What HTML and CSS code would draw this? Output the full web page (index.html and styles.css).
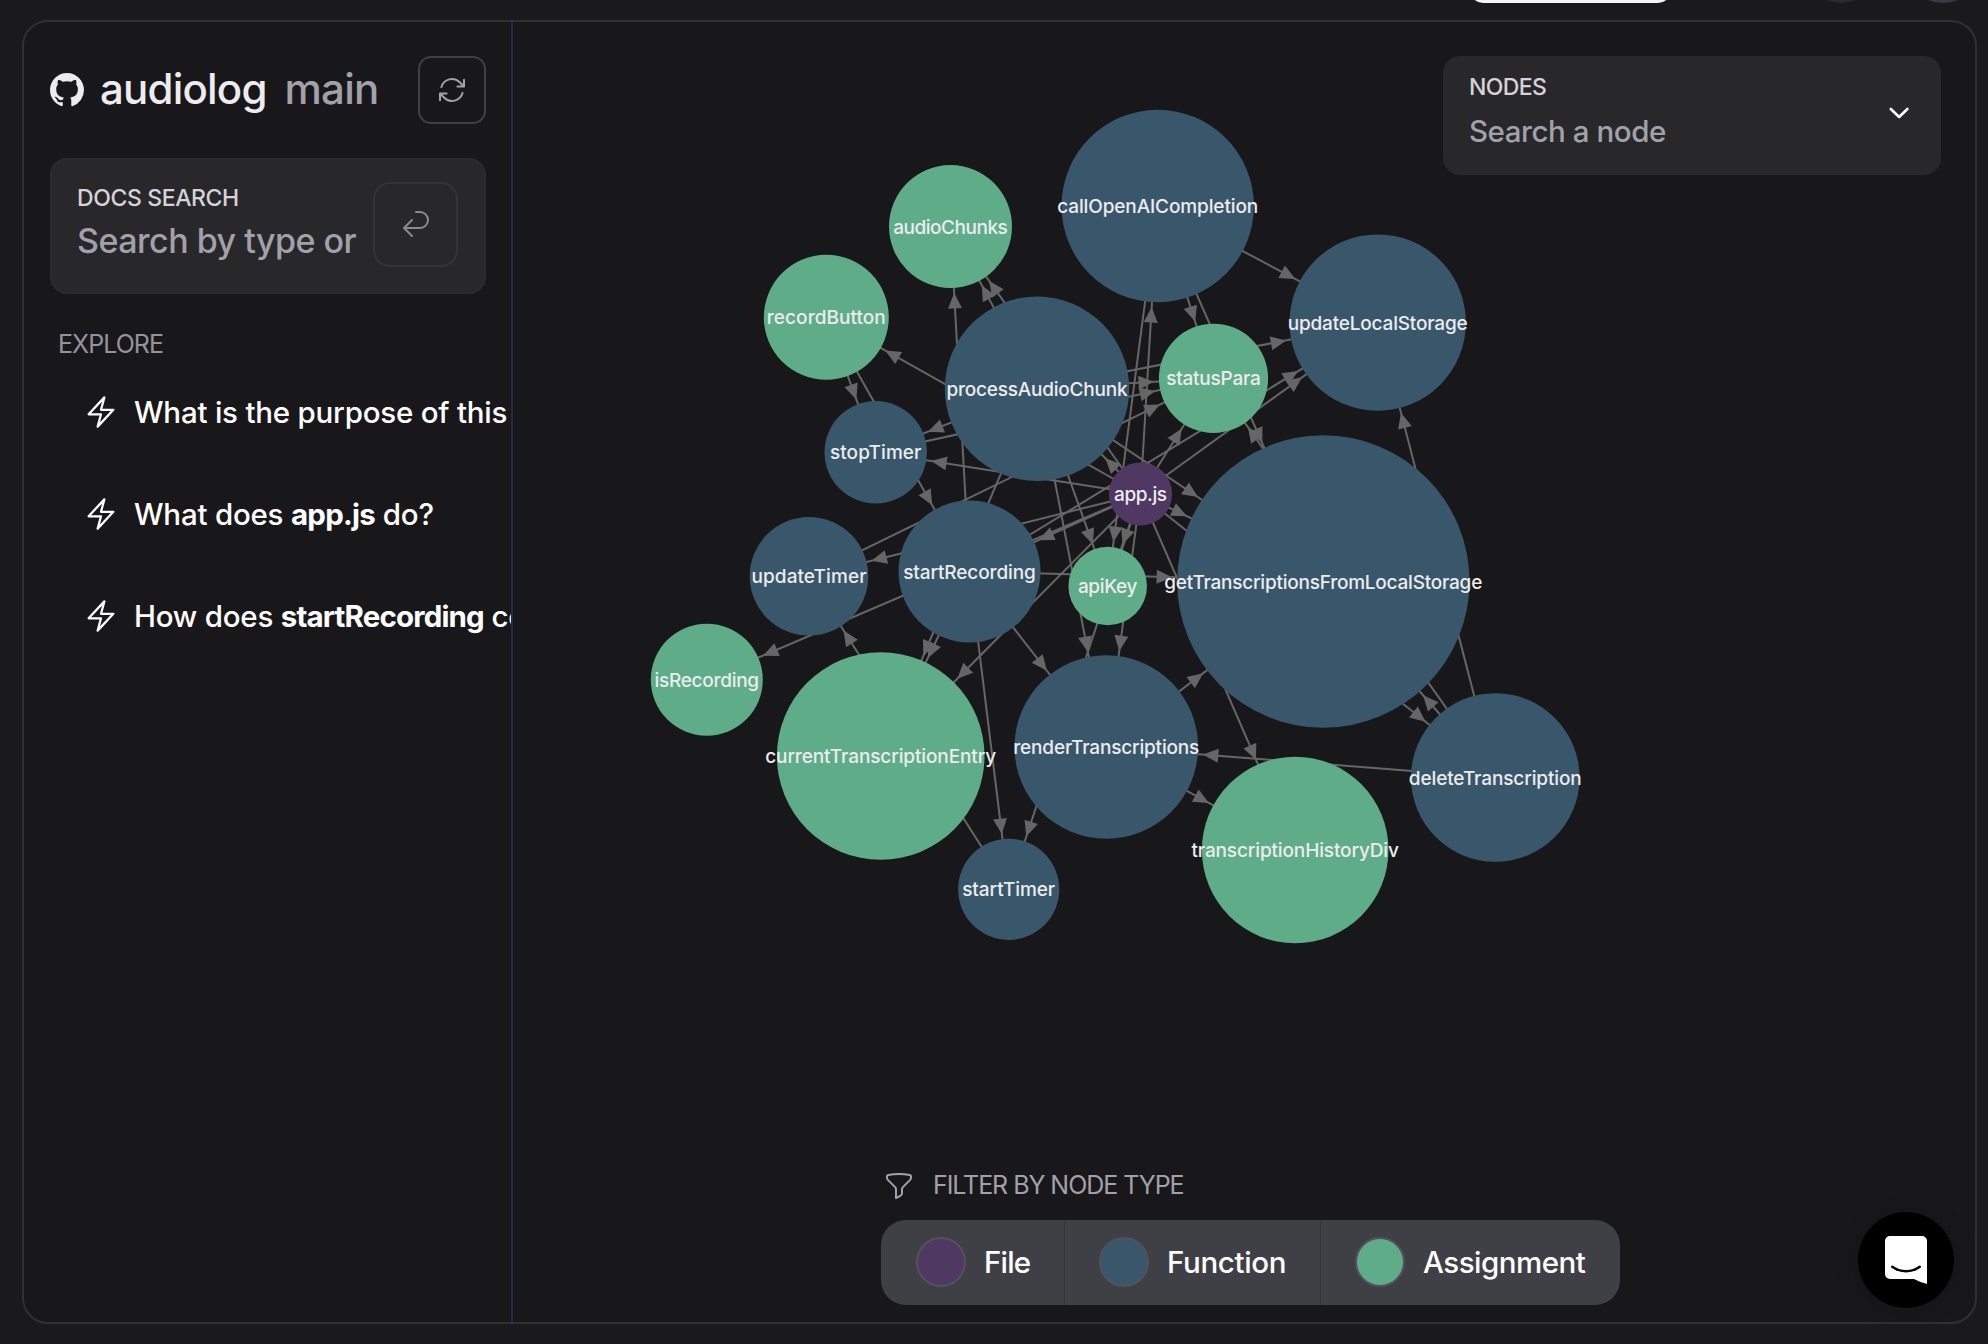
FILE: index.html
```
<!DOCTYPE html>
<html lang="en">
<head>
<meta charset="utf-8">
<title>audiolog</title>
<link rel="stylesheet" href="styles.css">
</head>
<body>
<div class="page">
  <header class="topbar">
    <div class="topbar-cta"></div>
    <div class="topbar-circle"></div>
    <div class="topbar-circle topbar-avatar"></div>
  </header>
  <div class="frame">
    <aside class="sidebar">
      <div class="repo">
        <svg class="repo-logo" viewBox="0 0 16 16" fill="currentColor"><path d="M8 0C3.58 0 0 3.58 0 8c0 3.54 2.29 6.53 5.47 7.59.4.07.55-.17.55-.38 0-.19-.01-.82-.01-1.49-2.01.37-2.53-.49-2.69-.94-.09-.23-.48-.94-.82-1.13-.28-.15-.68-.52-.01-.53.63-.01 1.08.58 1.23.82.72 1.21 1.87.87 2.33.66.07-.52.28-.87.51-1.07-1.78-.2-3.64-.89-3.64-3.95 0-.87.31-1.59.82-2.15-.08-.2-.36-1.02.08-2.12 0 0 .67-.21 2.2.82.64-.18 1.32-.27 2-.27s1.36.09 2 .27c1.53-1.04 2.2-.82 2.2-.82.44 1.1.16 1.92.08 2.12.51.56.82 1.27.82 2.15 0 3.07-1.87 3.75-3.65 3.95.29.25.54.73.54 1.48 0 1.07-.01 1.93-.01 2.2 0 .21.15.46.55.38A8.01 8.01 0 0 0 16 8c0-4.42-3.58-8-8-8z"/></svg>
        <div class="repo-title"><span class="repo-name">audiolog</span><span class="repo-branch">main</span></div>
        <button class="refresh" aria-label="Refresh">
          <svg width="32" height="32" viewBox="0 0 24 24" fill="none" stroke="currentColor" stroke-width="1.5" stroke-linecap="round" stroke-linejoin="round"><path d="M16.023 9.348h4.992V4.356M2.985 19.644v-4.992h4.992M2.985 14.652l3.181 3.183a8.25 8.25 0 0 0 13.803-3.7M4.031 9.865a8.25 8.25 0 0 1 13.803-3.7l3.181 3.182"/></svg>
        </button>
      </div>
      <div class="docs-search">
        <div class="docs-field">
          <div class="label">DOCS SEARCH</div>
          <div class="docs-placeholder">Search by type or</div>
        </div>
        <button class="enter" aria-label="Search">
          <svg width="32" height="32" viewBox="0 0 24 24" fill="none" stroke="currentColor" stroke-width="1.5" stroke-linecap="round" stroke-linejoin="round"><path d="M9 21l-6-6 6-6M3 15h12a6 6 0 0 0 0-12h-3"/></svg>
        </button>
      </div>
      <h2 class="explore">EXPLORE</h2>
      <ul class="questions">
        <li><svg class="bolt" viewBox="0 0 24 24"><path d="m3.75 13.5 10.5-11.25L12 10.5h8.25L9.75 21.75 12 13.5H3.75Z"/></svg><span>What is the purpose of this</span></li>
        <li><svg class="bolt" viewBox="0 0 24 24"><path d="m3.75 13.5 10.5-11.25L12 10.5h8.25L9.75 21.75 12 13.5H3.75Z"/></svg><span>What does <b>app.js</b> do?</span></li>
        <li><svg class="bolt" viewBox="0 0 24 24"><path d="m3.75 13.5 10.5-11.25L12 10.5h8.25L9.75 21.75 12 13.5H3.75Z"/></svg><span>How does <b class="long">startRecording</b> co</span></li>
      </ul>
    </aside>
    <main class="stage">
      <svg class="graph" id="graph" viewBox="513 22 1462 1300"></svg>
      <div class="node-select">
        <div>
          <div class="label nodes-label">NODES</div>
          <div class="node-placeholder">Search a node</div>
        </div>
        <svg class="chevron" width="24" height="24" viewBox="0 0 24 24" fill="none" stroke="#fff" stroke-width="2.6" stroke-linecap="round" stroke-linejoin="round"><path d="M3.8 8l8.3 8 8.3-8"/></svg>
      </div>
      <div class="filter">
        <div class="filter-head">
          <svg width="32" height="32" viewBox="0 0 24 24" fill="none" stroke="currentColor" stroke-width="1.5" stroke-linecap="round" stroke-linejoin="round"><path d="M12 3c2.755 0 5.455.232 8.083.678.533.09.917.556.917 1.096v1.044a2.25 2.25 0 0 1-.659 1.591l-5.432 5.432a2.25 2.25 0 0 0-.659 1.591v2.927a2.25 2.25 0 0 1-1.244 2.013L9.75 21v-6.568a2.25 2.25 0 0 0-.659-1.591L3.659 7.409A2.25 2.25 0 0 1 3 5.818V4.774c0-.54.384-1.006.917-1.096A48.32 48.32 0 0 1 12 3Z"/></svg>
          <span>FILTER BY NODE TYPE</span>
        </div>
        <div class="filter-bar">
          <div class="type type-file"><i class="dot file"></i><span>File</span></div>
          <div class="type type-function"><i class="dot function"></i><span>Function</span></div>
          <div class="type type-assignment"><i class="dot assignment"></i><span>Assignment</span></div>
        </div>
      </div>
    </main>
  </div>
  <button class="chat" aria-label="Open chat">
    <svg width="42" height="48" viewBox="0 0 42 48"><path fill="#fff" d="M5 0h32a5 5 0 0 1 5 5v43c-4-1-9-3-13-5H5a5 5 0 0 1-5-5V5a5 5 0 0 1 5-5z"/><path fill="none" stroke="#000" stroke-width="2.4" stroke-linecap="round" d="M7.2 30.7c8 6 19.600 6 27.600 0"/></svg>
  </button>
</div>
<script src="graph.js"></script>
</body>
</html>
```
FILE: styles.css
```
* { box-sizing: border-box; }

body {
  margin: 0;
  background: #1a1a1c;
  color: #fff;
  font-family: Inter, "Liberation Sans", sans-serif;
  font-weight: 450;
}

button { padding: 0; background: none; font: inherit; }

.page {
  position: relative;
  width: 1988px;
  height: 1344px;
  overflow: hidden;
  display: flex;
  flex-direction: column;
}

.topbar {
  height: 20px;
  flex: none;
  display: flex;
  align-items: flex-start;
  justify-content: flex-end;
  padding-right: 5px;
}
.topbar-cta {
  width: 201px;
  height: 72px;
  margin: -69px 130px 0 0;
  border-radius: 13px;
  background: #f4f4f5;
}
.topbar-circle {
  width: 80px;
  height: 80px;
  margin-top: -77px;
  border-radius: 50%;
  background: #29292b;
}
.topbar-avatar { margin-left: 22px; background: #3a3a42; }

.frame {
  flex: none;
  width: 1955px;
  height: 1304px;
  margin-left: 22px;
  display: flex;
  border: 2px solid #303033;
  border-radius: 26px;
  background: #18181a;
  overflow: hidden;
}

.sidebar {
  width: 489px;
  flex: none;
  padding: 34px 25px 0 26px;
  border-right: 2px solid #222a3b;
  overflow: hidden;
}

.repo { display: flex; align-items: center; height: 68px; }
.repo-logo { width: 34px; height: 34px; color: #ececee; flex: none; }
.repo-title {
  flex: 1;
  display: flex;
  gap: 18px;
  margin-left: 16px;
  padding-bottom: 2px;
  font-size: 42px;
  line-height: 52px;
  letter-spacing: -0.8px;
}
.repo-name { color: #ececee; }
.repo-branch { color: #a1a1aa; }
.refresh {
  width: 68px;
  height: 68px;
  flex: none;
  display: grid;
  place-items: center;
  border: 2px solid #3f3f46;
  border-radius: 13px;
  color: #a1a1aa;
}

.docs-search {
  display: flex;
  justify-content: space-between;
  height: 136px;
  margin-top: 34px;
  padding: 22px 26px 0 25px;
  border: 2px solid #2c2c2e;
  border-radius: 17px;
  background: #28282a;
}
.label {
  font-size: 23px;
  line-height: 30px;
  letter-spacing: -0.38px;
  color: #d4d4d8;
}
.docs-field { padding-top: 1px; }
.docs-placeholder {
  margin-top: 5px;
  font-size: 34px;
  line-height: 46px;
  letter-spacing: -0.5px;
  color: #a1a1aa;
  white-space: nowrap;
}
.enter {
  width: 85px;
  height: 85px;
  flex: none;
  display: grid;
  place-items: center;
  padding-bottom: 2px;
  border: 2px solid #343437;
  border-radius: 17px;
  color: #8b8b8f;
}

.explore {
  margin: 35px 0 0 8px;
  font-size: 25px;
  font-weight: 400;
  line-height: 30px;
  letter-spacing: -0.95px;
  color: #93939b;
}

.questions { list-style: none; margin: 2px 0 0; padding: 0 0 0 33px; }
.questions li {
  display: flex;
  align-items: center;
  gap: 17px;
  height: 102px;
  font-size: 29.5px;
  letter-spacing: -0.22px;
  white-space: nowrap;
}
.questions b { font-weight: 650; letter-spacing: -0.75px; }
.questions b.long { letter-spacing: -0.85px; }
.bolt {
  width: 36px;
  height: 36px;
  margin-right: -2px;
  flex: none;
  fill: none;
  stroke: #fff;
  stroke-width: 1.5;
  stroke-linecap: round;
  stroke-linejoin: round;
}

.stage { position: relative; flex: 1; }
.graph { display: block; width: 1462px; height: 1300px; }
.graph line { stroke: #666; stroke-width: 2; }
.graph .arrow { fill: #666; }
.graph text {
  font-size: 19px;
  font-weight: 450;
  fill: #ececee;
  text-anchor: middle;
}
.node-file { fill: #4f3861; }
.node-function { fill: #39576a; }
.node-assignment { fill: #5fad88; }

.node-select {
  position: absolute;
  top: 34px;
  right: 34px;
  width: 498px;
  height: 119px;
  display: flex;
  align-items: center;
  justify-content: space-between;
  padding: 0 30px 9px 26px;
  border-radius: 17px;
  background: #28282a;
}
.nodes-label { letter-spacing: -0.6px; margin-bottom: 9px; }
.chevron { margin-top: 4px; }
.node-placeholder {
  font-size: 29.5px;
  line-height: 40px;
  letter-spacing: -0.44px;
  color: #a1a1aa;
}

.filter { position: absolute; left: 368px; top: 1148px; }
.filter-head {
  display: flex;
  align-items: center;
  gap: 18px;
  height: 30px;
  margin-bottom: 20px;
  font-size: 25px;
  font-weight: 400;
  letter-spacing: -1.05px;
  color: #a1a1aa;
}
.filter-head svg { margin: 2px 0 0 2px; }
.filter-bar {
  display: flex;
  height: 85px;
  border-radius: 25px;
  background: #3f3f46;
}
.type {
  display: flex;
  align-items: center;
  gap: 18px;
  padding: 0 0 2px 35px;
  font-size: 29.5px;
}
.type + .type { padding-left: 34px; border-left: 1px solid #36363c; }
.type-file { width: 183px; letter-spacing: -0.8px; }
.type-function { width: 256px; letter-spacing: -0.35px; }
.type-assignment { width: 300px; letter-spacing: -0.5px; }
.dot {
  width: 50px;
  height: 50px;
  border: 2px solid #52525b;
  border-radius: 50%;
}
.dot.file { background: #4f3861; }
.dot.function { background: #39576a; }
.dot.assignment { background: #5fad88; }

.chat {
  position: absolute;
  left: 1858px;
  top: 1212px;
  width: 96px;
  height: 96px;
  display: grid;
  place-items: center;
  border: 0;
  border-radius: 50%;
  background: #000;
  box-shadow: 0 2px 24px rgba(0, 0, 0, 0.16);
}
```
FILE: graph.js
```
// name: [x, y, radius, type, label width]
const nodes = {
  audioChunks: [950.5, 226.5, 61.5, 'assignment', 114.5],
  recordButton: [826.3, 317.3, 62.5, 'assignment', 119],
  stopTimer: [875.7, 452.3, 51.2, 'function', 91.5],
  processAudioChunk: [1037, 388.8, 92.2, 'function', 181],
  callOpenAICompletion: [1157.7, 206, 96.2, 'function', 201],
  updateLocalStorage: [1377.7, 322.6, 88.2, 'function', 180],
  statusPara: [1213.5, 378.3, 54.6, 'assignment', 94.5],
  'app.js': [1140.5, 494, 31.6, 'file', 53],
  apiKey: [1107.7, 586, 39.3, 'assignment', 59.5],
  getTranscriptionsFromLocalStorage: [1323.3, 581.5, 146.2, 'function', 318],
  renderTranscriptions: [1106.3, 747, 91.8, 'function', 186],
  deleteTranscription: [1495.3, 777.5, 84.3, 'function', 173],
  transcriptionHistoryDiv: [1295.2, 850, 93.3, 'assignment', 207.5],
  currentTranscriptionEntry: [880.7, 756, 103.8, 'assignment', 231],
  startTimer: [1008.7, 889.3, 50.6, 'function', 93],
  updateTimer: [809, 576.3, 59.3, 'function', 115],
  startRecording: [969.5, 571.5, 71, 'function', 132.5],
  isRecording: [706.8, 679.7, 56, 'assignment', 104.5],
};

const links = {
  'app.js': ['audioChunks', 'recordButton', 'stopTimer', 'processAudioChunk', 'callOpenAICompletion',
    'updateLocalStorage', 'statusPara', 'apiKey', 'getTranscriptionsFromLocalStorage',
    'renderTranscriptions', 'deleteTranscription', 'transcriptionHistoryDiv',
    'currentTranscriptionEntry', 'startTimer', 'updateTimer', 'startRecording', 'isRecording'],
  recordButton: ['stopTimer', 'startRecording'],
  processAudioChunk: ['audioChunks', 'stopTimer', 'statusPara', 'updateLocalStorage', 'apiKey',
    'renderTranscriptions', 'currentTranscriptionEntry', 'getTranscriptionsFromLocalStorage'],
  stopTimer: ['statusPara'],
  updateTimer: ['statusPara'],
  startTimer: ['updateTimer'],
  startRecording: ['audioChunks', 'updateLocalStorage', 'getTranscriptionsFromLocalStorage',
    'renderTranscriptions', 'startTimer', 'currentTranscriptionEntry'],
  callOpenAICompletion: ['updateLocalStorage', 'statusPara', 'getTranscriptionsFromLocalStorage', 'apiKey'],
  renderTranscriptions: ['getTranscriptionsFromLocalStorage', 'transcriptionHistoryDiv'],
  deleteTranscription: ['updateLocalStorage', 'getTranscriptionsFromLocalStorage',
    'renderTranscriptions', 'statusPara'],
};

const graph = document.getElementById('graph');

function add(tag, attrs, text) {
  const el = document.createElementNS('http://www.w3.org/2000/svg', tag);
  for (const key in attrs) el.setAttribute(key, attrs[key]);
  if (text) el.textContent = text;
  graph.appendChild(el);
}

for (const from in links) {
  for (const to of links[from]) {
    const [x1, y1] = nodes[from];
    const [x2, y2, r] = nodes[to];
    add('line', { x1, y1, x2, y2 });
    // The arrowhead sits just outside the target circle.
    const angle = Math.atan2(y2 - y1, x2 - x1) * 180 / Math.PI;
    add('path', {
      class: 'arrow',
      d: 'M5 0 L20.5 -7 V7 Z',
      transform: `translate(${x2} ${y2}) rotate(${angle + 180}) translate(${r} 0)`,
    });
  }
}

for (const name in nodes) {
  const [cx, cy, r, type] = nodes[name];
  add('circle', { cx, cy, r, class: 'node-' + type });
}

for (const name in nodes) {
  const [x, y, , , textLength] = nodes[name];
  add('text', { x, y: y + 7, textLength }, name);
}
```
